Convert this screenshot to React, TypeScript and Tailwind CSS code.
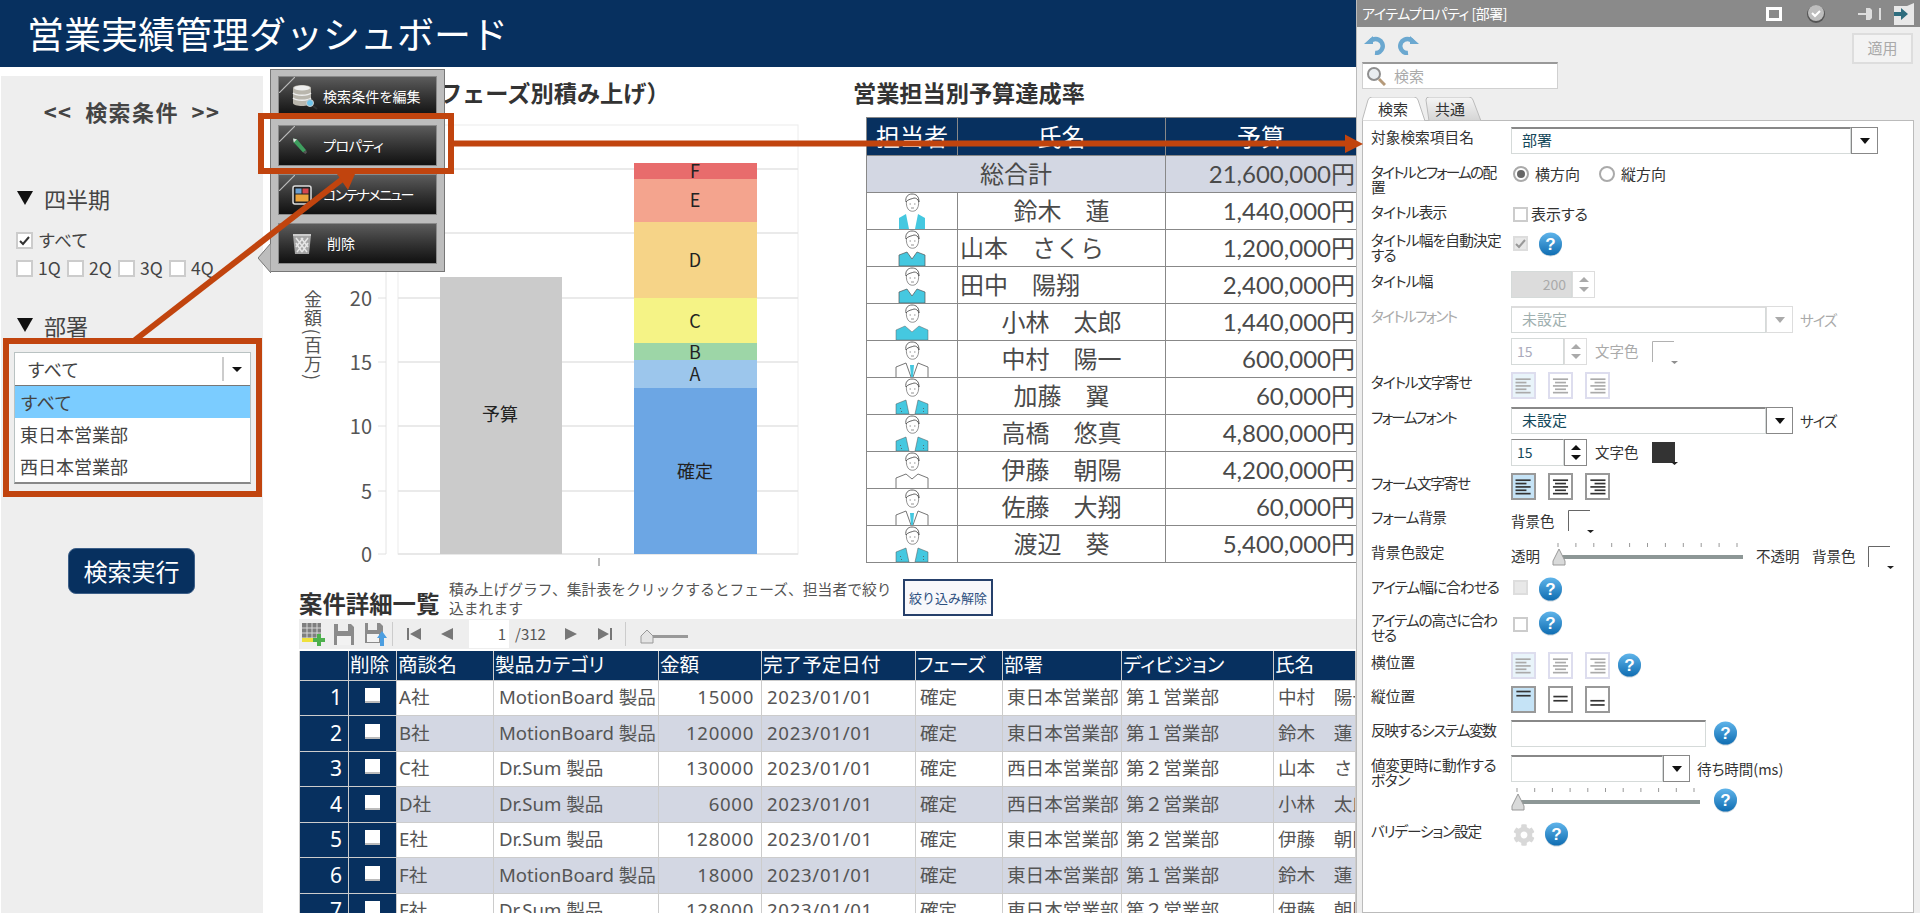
import { clsx } from 'clsx'
import { FaCog } from 'react-icons/fa'

/* ───── SVG Icons ───── */
const HelpIcon = ({ className }: { className?: string }) => (
  <svg width="25" height="25" viewBox="0 0 25 25" className={className}>
    <defs>
      <linearGradient id="helpBlue" x1="0" y1="0" x2="0" y2="1">
        <stop offset="0" stopColor="#5fb4ea" />
        <stop offset="1" stopColor="#0f6db2" />
      </linearGradient>
    </defs>
    <circle cx="12.5" cy="13" r="11.5" fill="#c9d4dc" />
    <circle cx="12.5" cy="12" r="11.5" fill="url(#helpBlue)" />
    <text x="12.5" y="18" textAnchor="middle" fontSize="17" fontWeight="700" fill="#fff" fontFamily="Liberation Sans, sans-serif">?</text>
  </svg>
)

const icons = {
  db: (
    <svg width="26" height="26" viewBox="0 0 26 26">
      <path d="M1 4c0-4 18-4 18 0v15c0 4-18 4-18 0Z" fill="#b9b6ad" />
      <path d="M1 9c3 3 15 3 18 0M1 14c3 3 15 3 18 0" stroke="#eee" strokeWidth="1.5" fill="none" />
      <ellipse cx="10" cy="4" rx="8" ry="2.5" fill="#eee" />
      <circle cx="18" cy="19" r="3.5" fill="#6cc3ea" stroke="#ccc" />
      <path d="m21 22 4 3" stroke="#333" strokeWidth="2" />
    </svg>
  ),
  pencil: (
    <svg width="16" height="17" viewBox="0 0 20 22">
      <path d="m1 2 5 1 12 14-4 3L2 7Z" fill="#3f9f5f" />
      <path d="m1 2 5 1-4 4Z" fill="#ddd" />
      <path d="m14 20 4-3 1 3-2 2Z" fill="#555" />
    </svg>
  ),
  container: (
    <svg width="20" height="20" viewBox="0 0 20 20">
      <rect x="1" y="1" width="18" height="18" rx="2" fill="#222" stroke="#ddd" strokeWidth="1.5" />
      <rect x="3.5" y="3.5" width="6" height="5" fill="#6c9fd0" />
      <rect x="10.5" y="3.5" width="6" height="5" fill="#d6484f" />
      <rect x="3.5" y="9.5" width="13" height="7" fill="#eca43c" />
    </svg>
  ),
  trash: (
    <svg width="20" height="22" viewBox="0 0 20 22">
      <path d="M1 2h18l-2 19H3Z" fill="#a5a5a5" />
      <path d="M4 5l11 14M9 5l7 9M4 10l6 9M16 5 5 19M11 5l-7 9M16 10l-6 9" stroke="#e6e6e6" strokeWidth="1.5" />
      <rect x="1" y="1" width="18" height="2" fill="#ccc" />
    </svg>
  ),
  tableAdd: (
    <svg width="25" height="25" viewBox="0 0 25 25">
      <rect x="1" y="1" width="19" height="19" fill="#7f7f7f" />
      <path d="M1 6h19M1 11h19M1 16h19M6 1v19M11 1v19M16 1v19" stroke="#d8d8d8" />
      <rect x="1" y="16" width="14" height="4" fill="#efe13c" />
      <path d="M18 12v12M12 18h12" stroke="#4cb04c" strokeWidth="4" />
    </svg>
  ),
  save: (
    <svg width="22" height="23" viewBox="0 0 22 23">
      <path d="M1 1h17l3 3v18H1Z" fill="#8b8b8b" />
      <rect x="5" y="1" width="10" height="7" fill="#eee" />
      <rect x="4" y="13" width="14" height="9" fill="#f2f2f2" />
    </svg>
  ),
  saveUp: (
    <svg width="24" height="25" viewBox="0 0 24 25">
      <path d="M1 1h15l3 3v17H1Z" fill="#8b8b8b" />
      <rect x="4" y="1" width="9" height="7" fill="#eee" />
      <rect x="3" y="12" width="12" height="8" fill="#f2f2f2" />
      <path d="M18 9l5 7h-3v8h-4v-8h-3Z" fill="#4c9ee0" />
    </svg>
  ),
  first: <svg width="16" height="12" viewBox="0 0 16 12"><path d="M1 0h2v12H1ZM15 0v12L4 6Z" fill="#777" /></svg>,
  prev: <svg width="12" height="12" viewBox="0 0 12 12"><path d="M12 0v12L0 6Z" fill="#777" /></svg>,
  next: <svg width="12" height="12" viewBox="0 0 12 12"><path d="M0 0v12l12-6Z" fill="#777" /></svg>,
  last: <svg width="16" height="12" viewBox="0 0 16 12"><path d="M13 0h2v12h-2ZM1 0v12l11-6Z" fill="#777" /></svg>,
  undo: (
    <svg width="22" height="20" viewBox="0 0 22 20">
      <path d="M6 7a7 7 0 1 1 5 11" fill="none" stroke="#6ba8d0" strokeWidth="4.5" />
      <path d="M0 9h9V1Z" fill="#6ba8d0" />
    </svg>
  ),
  redo: (
    <svg width="22" height="20" viewBox="0 0 22 20">
      <path d="M16 7a7 7 0 1 0-5 11" fill="none" stroke="#6ba8d0" strokeWidth="4.5" />
      <path d="M22 9h-9V1Z" fill="#6ba8d0" />
    </svg>
  ),
  search: (
    <svg width="20" height="20" viewBox="0 0 20 20">
      <circle cx="8" cy="8" r="6" fill="#e9edf0" stroke="#8f8f8f" strokeWidth="2" />
      <path d="m13 13 6 6" stroke="#b59a7a" strokeWidth="3" />
    </svg>
  ),
  winSquare: <svg width="16" height="14" viewBox="0 0 16 14"><rect x="1.5" y="1.5" width="13" height="11" fill="none" stroke="#fff" strokeWidth="3" /></svg>,
  winCheck: (
    <svg width="20" height="20" viewBox="0 0 20 20">
      <circle cx="10" cy="10" r="9" fill="#555" />
      <circle cx="10" cy="9" r="8" fill="#bdbdbd" />
      <path d="m6 9 3 3 5-5" fill="none" stroke="#fff" strokeWidth="2" />
    </svg>
  ),
  winPin: (
    <svg width="24" height="14" viewBox="0 0 24 14">
      <path d="M0 7h8" stroke="#ddd" strokeWidth="2" />
      <path d="M8 1h4l2 2v8l-2 2H8Z" fill="#ddd" />
      <path d="M22 1v12" stroke="#ddd" strokeWidth="2" />
    </svg>
  ),
  winExit: (
    <svg width="20" height="22" viewBox="0 0 20 22">
      <path d="M0 3h13l7-3v22H0Z" fill="#e8e8e8" />
      <path d="M0 9h7V5l7 6-7 6v-4H0Z" fill="#2f6d7e" />
    </svg>
  ),
}

/* ───── small avatar drawings for the budget table ───── */
type AvatarKind = 'full' | 'vest' | 'suit' | 'tie' | 'white' | 'narrow'

const Avatar = ({ kind }: { kind: AvatarKind }) => (
  <svg width="34" height="36" viewBox="0 0 34 36" className="mx-auto block">
    <path d="M12 5c2-3 9-3 11 0 1 4 1 8-1 11-2 3-7 3-9 0-2-3-2-7-1-11Z" fill="#fff" stroke="#777" strokeWidth="0.8" />
    <path d="M11 9c-1-5 2-8 6-8s7 2 7 8c-1-3-3-4-5-4-2 1-6 1-8 4Z" fill="#fff" stroke="#555" strokeWidth="0.9" />
    <path d="M14.500 11h1.500M19 11h1.500M16 15h3" stroke="#777" strokeWidth="0.8" />
    {kind === 'full' && <path d="M1 36V26l9-4 7 6 7-6 9 4v10Z" fill="#45c8e0" stroke="#666" strokeWidth="0.5" />}
    {kind === 'vest' && <path d="M4 36V25l8-3 5 7 5-7 8 3v11Z" fill="#45c8e0" stroke="#555" strokeWidth="0.7" />}
    {kind === 'narrow' && <path d="M4 36V25l7-4 3 15Zm26 0V25l-7-4-3 15Z" fill="#45c8e0" />}
    {kind === 'suit' && (
      <>
        <path d="M1 36V26l10-4 3 14Zm32 0V26l-10-4-3 14Z" fill="#45c8e0" stroke="#555" strokeWidth="0.5" />
        <path d="m5 30 1 1m22-1 1 1m-23 2 1 1m21-1 1 1" stroke="#555" strokeWidth="0.8" />
      </>
    )}
    {kind === 'tie' && (
      <>
        <path d="M1 36V26l10-4M33 36V26l-10-4M11 22l5 14m7-14-5 14" fill="none" stroke="#666" strokeWidth="0.9" />
        <path d="m15 24 4 0-1 12h-2Z" fill="#45c8e0" />
      </>
    )}
    {kind === 'white' && <path d="M1 36V26l10-4 6 5 6-5 10 4v10" fill="none" stroke="#666" strokeWidth="0.9" />}
  </svg>
)

const BUDGET: { kind: AvatarKind; name: string; yen: string; left?: boolean }[] = [
  { kind: 'narrow', name: '鈴木　蓮', yen: '1,440,000円' },
  { kind: 'vest', name: '山本　さくら', yen: '1,200,000円', left: true },
  { kind: 'vest', name: '田中　陽翔', yen: '2,400,000円', left: true },
  { kind: 'full', name: '小林　太郎', yen: '1,440,000円' },
  { kind: 'tie', name: '中村　陽一', yen: '600,000円' },
  { kind: 'suit', name: '加藤　翼', yen: '60,000円' },
  { kind: 'suit', name: '高橋　悠真', yen: '4,800,000円' },
  { kind: 'white', name: '伊藤　朝陽', yen: '4,200,000円' },
  { kind: 'tie', name: '佐藤　大翔', yen: '60,000円' },
  { kind: 'suit', name: '渡辺　葵', yen: '5,400,000円' },
]

const DEALS = [
  ['A社', 'MotionBoard 製品', '15000', '東日本営業部', '第１営業部', '中村　陽一'],
  ['B社', 'MotionBoard 製品', '120000', '東日本営業部', '第１営業部', '鈴木　蓮'],
  ['C社', 'Dr.Sum 製品', '130000', '西日本営業部', '第２営業部', '山本　さくら'],
  ['D社', 'Dr.Sum 製品', '6000', '西日本営業部', '第２営業部', '小林　太郎'],
  ['E社', 'Dr.Sum 製品', '128000', '東日本営業部', '第２営業部', '伊藤　朝陽'],
  ['F社', 'MotionBoard 製品', '18000', '東日本営業部', '第１営業部', '鈴木　蓮'],
  ['F社', 'Dr.Sum 製品', '128000', '東日本営業部', '第２営業部', '伊藤　朝陽'],
]

const STACK = [
  { label: 'F', y: 163, h: 16, color: '#e86c6c', ty: 178 },
  { label: 'E', y: 179, h: 43, color: '#f4a48e', ty: 207 },
  { label: 'D', y: 222, h: 76, color: '#f6d488', ty: 267 },
  { label: 'C', y: 298, h: 45, color: '#f5f386', ty: 328 },
  { label: 'B', y: 343, h: 17, color: '#9dd6a7', ty: 359 },
  { label: 'A', y: 360, h: 28, color: '#9cc6ec', ty: 381 },
  { label: '確定', y: 388, h: 166, color: '#6ca6e4', ty: 478 },
]

/* ───── chart, drawn in page coordinates ───── */
function Chart() {
  const ticks = [[0, 554], [5, 491], [10, 426], [15, 362], [20, 298], [25, 233], [30, 169]]
  return (
    <svg width="590" height="462" viewBox="263 117 590 462" className="block">
      <rect x="398" y="125" width="400" height="429" fill="#fff" stroke="#ececec" />
      <path d="M386 125v429" stroke="#e4e4e4" />
      {ticks.map(([n, y]) => (
        <g key={n}>
          <path d={`M398 ${y}h400`} stroke="#e3e3e3" strokeWidth="1.4" />
          <path d={`M378 ${y}h8`} stroke="#e0e0e0" />
          <text x="372" y={y + 8} textAnchor="end" fontSize="20" fill="#555">{n}</text>
        </g>
      ))}
      <path d="M599 558v8" stroke="#777" />
      <text x="313" y="290" fontSize="18" fill="#555" className="[writing-mode:vertical-rl] tracking-[1.2px]">金額(百万)</text>
      <rect x="440" y="277" width="122" height="277" fill="#cbcbcb" />
      <text x="500" y="421" textAnchor="middle" fontSize="18" fill="#222">予算</text>
      {STACK.map(s => (
        <g key={s.label}>
          <rect x="634" y={s.y} width="123" height={s.h} fill={s.color} />
          <text x="695" y={s.ty} textAnchor="middle" fontSize="18" fill="#222">{s.label}</text>
        </g>
      ))}
    </svg>
  )
}

const MENU = [
  { icon: icons.db, text: '検索条件を編集', notch: true, text_: 'tracking-[0.1px]' },
  { icon: icons.pencil, text: 'プロパティ', notch: true, text_: 'tracking-[-0.4px]' },
  { icon: icons.container, text: 'コンテナメニュー', notch: true, text_: 'tracking-[-1.6px]' },
  { icon: icons.trash, text: '削除', notch: false, text_: 'pl-[4px]' },
]

/* ───── right panel parts ───── */
function Row({ className, label, dim, ls, children }: { className: string; label?: React.ReactNode; dim?: boolean; ls?: string; children?: React.ReactNode }) {
  return (
    <div className={clsx('flex', className)}>
      <div className={clsx('w-[140px] shrink-0 pt-[2px] text-[14.7px] leading-[15px] whitespace-nowrap', dim ? 'text-[#aaa]' : 'text-[#333]', ls)}>{label}</div>
      <div className="flex items-start">{children}</div>
    </div>
  )
}

function Combo({ w, text, dim }: { w: string; text?: string; dim?: boolean }) {
  return (
    <div className={clsx('flex h-[27px] text-[15px]', w)}>
      <div className={clsx('flex-1 border border-[#d5dad9] border-t-2 pl-[10px] leading-[22px] bg-white', dim ? 'border-t-[#ddd] text-[#9fb0b0]' : 'border-t-[#888] text-[#14485a]')}>{text}</div>
      <div className={clsx('w-[27px] border bg-white flex items-center justify-center', dim ? 'border-[#ddd]' : 'border-[#888]')}>
        <span className={clsx('border-x-[5px] border-x-transparent border-t-[6px]', dim ? 'border-t-[#aaa]' : 'border-t-[#111]')} />
      </div>
    </div>
  )
}

function Spin({ value, dim, gray }: { value: string; dim?: boolean; gray?: boolean }) {
  return (
    <div className={clsx('flex h-[27px]', gray ? 'w-[84px]' : 'w-[76px]')}>
      <div className={clsx('flex-1 border border-[#d5dad9] pl-[5px] text-[14px] leading-[25px]', gray ? 'bg-[#dcdcdc] text-right pr-[5px] text-[#aaa]' : dim ? 'bg-white text-[#aab]' : 'bg-white border-t-[#888] text-[#14485a]')}>{value}</div>
      <div className={clsx('w-[23px] border flex flex-col items-center justify-around bg-white py-[3px]', dim || gray ? 'border-[#ddd]' : 'border-[#888]')}>
        <span className={clsx('border-x-[5px] border-x-transparent border-b-[5px]', dim || gray ? 'border-b-[#aaa]' : 'border-b-[#111]')} />
        <span className={clsx('border-x-[5px] border-x-transparent border-t-[5px]', dim || gray ? 'border-t-[#aaa]' : 'border-t-[#111]')} />
      </div>
    </div>
  )
}

function Box({ checked, dim, className }: { checked?: boolean; dim?: boolean; className?: string }) {
  return (
    <span className={clsx('inline-flex border-2 items-center justify-center shrink-0', className ?? 'w-[15px] h-[15px]', dim ? 'bg-[#e8e8e8] border-[#ddd]' : 'bg-white border-[#ccc]')}>
      {checked && <svg width="11" height="11" viewBox="0 0 11 11"><path d="m1 6 3 3 6-7" fill="none" stroke={dim ? '#999' : '#333'} strokeWidth="2" /></svg>}
    </span>
  )
}

function Swatch({ fill, className }: { fill?: boolean; className?: string }) {
  return (
    <svg width="26" height="24" viewBox="0 0 26 24" className={className}>
      {fill ? <rect x="0" y="1" width="23" height="21" fill="#333" /> : <path d="M.5 22V1.5H22" fill="none" stroke="#666" />}
      <path d="m19 21 7 0-3.5 3Z" fill="#222" />
    </svg>
  )
}

function AlignBtn({ kind, active, level }: { kind: 'left' | 'center' | 'right' | 'top' | 'middle' | 'bottom'; active?: boolean; level: 'full' | 'fade' | 'mid' }) {
  const color = level === 'full' ? '#333' : '#aaa'
  const v = kind === 'top' ? 4 : kind === 'middle' ? 10 : kind === 'bottom' ? 15 : 0
  const rows = [4, 8, 12, 16, 20]
  const x = (i: number) => {
    const w = i % 2 ? 13 : 18
    if (kind === 'left') return { x1: 3, x2: 3 + w }
    if (kind === 'right') return { x1: 22 - w, x2: 22 }
    return { x1: 12.5 - w / 2, x2: 12.5 + w / 2 }
  }
  return (
    <div className={clsx('w-[25px] h-[27px] border-2', level === 'fade' || level === 'mid' ? 'border-[#dde]' : 'border-[#999]', active ? (level === 'full' ? 'bg-[#c5e3f6]' : 'bg-[#e9f4fa]') : 'bg-white')}>
      <svg width="21" height="23" viewBox="0 0 25 27" className="block">
        {v === 0
          ? rows.map((y, i) => <line key={y} {...x(i)} y1={y + 2} y2={y + 2} stroke={color} strokeWidth="2" />)
          : [0, 5].map(d => <line key={d} x1="4" x2="21" y1={v + d} y2={v + d} stroke={color} strokeWidth="2" />)}
      </svg>
    </div>
  )
}

const AlignSet = ({ level }: { level: 'full' | 'fade' | 'mid' }) => (
  <div className="flex gap-[12px]">
    <AlignBtn kind="left" level={level} active />
    <AlignBtn kind="center" level={level} />
    <AlignBtn kind="right" level={level} />
  </div>
)

function Slider({ w }: { w: number }) {
  return (
    <svg width={w} height="26" viewBox={`0 0 ${w} 26`}>
      {Array.from({ length: 11 }, (_, i) => (
        <line key={i} x1={6 + (i * (w - 12)) / 10} x2={6 + (i * (w - 12)) / 10} y1="1" y2="5" stroke="#999" />
      ))}
      <rect x="8" y="13" width={w - 8} height="4" fill="#8d9796" />
      <path d="M7 7 13 19v4H1v-4Z" fill="#d9dada" stroke="#999" />
    </svg>
  )
}

export default function App() {
  return (
    <div className="relative flex w-[1920px] h-[913px] overflow-hidden bg-white text-[#444] font-['Noto_Sans_CJK_JP',sans-serif]">
      <div className="w-[1356px] shrink-0 flex flex-col">
        {/* Header */}
        <header className="h-[67px] shrink-0 bg-[#07305f] pl-[27px] text-[37px] leading-[67px] text-white">営業実績管理ダッシュボード</header>

        <div className="flex flex-1 min-h-0">
          {/* Search conditions */}
          <aside className="w-[262px] ml-px mt-[9px] shrink-0 bg-[#eeeeee] text-[#444]">
            <h2 className="mt-[21px] text-center text-[22px] font-bold leading-[28px] whitespace-pre tracking-[1.4px]">&lt;&lt;  検索条件  &gt;&gt;</h2>
            <div className="mt-[59px] ml-[16px] flex items-center gap-[11px] text-[22px] leading-[28px]"><span className="border-x-[8px] border-x-transparent border-t-[14px] border-t-[#111]" />四半期</div>
            <div className="mt-[14px] ml-[15px] flex items-center gap-[5px] h-[28px] text-[17.5px]"><Box checked className="w-[17px] h-[17px]" />すべて</div>
            <div className="ml-[15px] flex items-center gap-[3px] h-[28px] text-[17.5px]">
              {['1Q', '2Q', '3Q', '4Q'].map(q => (
                <span key={q} className="flex items-center gap-[5px] w-[48px]"><Box className="w-[17px] h-[17px]" />{q}</span>
              ))}
            </div>
            <div className="mt-[29px] ml-[16px] flex items-center gap-[11px] text-[22px] leading-[28px]"><span className="border-x-[8px] border-x-transparent border-t-[14px] border-t-[#111]" />部署</div>
            <div className="mt-[13px] ml-[13px] w-[237px] border border-[#b9c2c2] border-b-2 border-b-[#888] bg-white">
              <div className="flex items-center h-[33px] border-b border-b-[#777] pl-[12px] text-[18px]">
                <span className="flex-1">すべて</span>
                <span className="h-[24px] border-l-2 border-l-[#ccc]" />
                <span className="mx-[8px] border-x-[5px] border-x-transparent border-t-[5px] border-t-[#111]" />
              </div>
              {['すべて', '東日本営業部', '西日本営業部'].map((t, i) => (
                <div key={t} className={clsx('h-[32px] pl-[5px] text-[18px] leading-[32px]', i === 0 && 'bg-[#7bccff]')}>{t}</div>
              ))}
            </div>
            <button className="block mt-[64px] ml-[67px] w-[127px] h-[46px] rounded-[8px] bg-[#07305f] border border-[#3d5f88] text-[24px] leading-none text-white">検索実行</button>
          </aside>

          {/* Main */}
          <main className="flex-1 min-w-0 flex flex-col overflow-hidden">
            <div className="flex h-[512px] shrink-0">
              <section className="w-[590px] shrink-0">
                <h2 className="h-[50px] pl-[60px] pt-[9px] text-[23.2px] font-bold leading-[32px] text-[#333] whitespace-nowrap">案件状況（フェーズ別積み上げ）</h2>
                <Chart />
              </section>
              <section className="flex-1 min-w-0">
                <h2 className="h-[50px] pt-[9px] text-[23.2px] font-bold leading-[32px] text-[#333]">営業担当別予算達成率</h2>
                <table className="ml-[13px] w-[490px] table-fixed border-collapse font-['Lato','Noto_Sans_CJK_JP',sans-serif] text-[24px] text-[#4a4a4a]">
                  <colgroup><col className="w-[91px]" /><col className="w-[208px]" /><col className="w-[191px]" /></colgroup>
                  <thead>
                    <tr className="h-[38px] bg-[#07305f] text-white">
                      {['担当者', '氏名', '予算'].map(h => <th key={h} className="border border-[#888] font-normal leading-none">{h}</th>)}
                    </tr>
                  </thead>
                  <tbody>
                    <tr className="h-[35px] bg-[#d3d7e3]">
                      <td colSpan={2} className="border border-[#888] text-center">総合計</td>
                      <td className="border border-[#888] text-right pr-[1px]">21,600,000円</td>
                    </tr>
                    {BUDGET.map(b => (
                      <tr key={b.name} className="h-[36.8px]">
                        <td className="border border-[#888] p-0 align-bottom"><Avatar kind={b.kind} /></td>
                        <td className={clsx('border border-[#888] py-0 leading-none', b.left ? 'pl-[2px]' : 'text-center')}>{b.name}</td>
                        <td className="border border-[#888] text-right pr-[1px] py-0 leading-none">{b.yen}</td>
                      </tr>
                    ))}
                  </tbody>
                </table>
              </section>
            </div>

            {/* Deal list */}
            <section className="pl-[36px]">
              <div className="flex h-[40px] items-start">
                <h2 className="mt-[9px] w-[150px] shrink-0 text-[23.4px] font-bold leading-[30px] text-[#333] whitespace-nowrap">案件詳細一覧</h2>
                <p className="w-[450px] shrink-0 text-[14.8px] leading-[19px] text-[#555]">積み上げグラフ、集計表をクリックするとフェーズ、担当者で絞り込まれます</p>
                <button className="ml-[4px] mt-[0px] w-[90px] h-[37px] border-2 border-[#26406b] bg-[#f8f8fb] text-[13px] text-[#2c4f80]">絞り込み解除</button>
              </div>
              <div className="flex items-center h-[30px] bg-[#eeeeee] pl-[2px] text-[#555]">
                {icons.tableAdd}
                <span className="ml-[7px]">{icons.save}</span>
                <span className="ml-[9px]">{icons.saveUp}</span>
                <span className="ml-[4px] h-[24px] border-l border-l-[#ccc]" />
                <span className="ml-[13px]">{icons.first}</span>
                <span className="ml-[19px]">{icons.prev}</span>
                <span className="ml-[16px] w-[40px] h-[28px] bg-white pr-[3px] text-right text-[15px] leading-[28px]">1</span>
                <span className="ml-[6px] text-[15px]">/312</span>
                <span className="ml-[19px]">{icons.next}</span>
                <span className="ml-[20px]">{icons.last}</span>
                <span className="ml-[12px] h-[24px] border-l border-l-[#ccc]" />
                <svg width="48" height="14" viewBox="0 0 48 14" className="ml-[14px] mt-[5px]">
                  <rect x="4" y="5" width="44" height="3" fill="#999" />
                  <path d="M7 0 13 6v7H1V6Z" fill="#e4e4e4" stroke="#999" />
                </svg>
              </div>
              <table className="mt-[2px] w-[1056px] table-fixed border-collapse font-['Noto_Sans','Noto_Sans_CJK_JP',sans-serif] text-[18.6px] text-[#555]">
                <colgroup>
                  <col className="w-[49px]" /><col className="w-[48px]" /><col className="w-[97px]" /><col className="w-[165px]" /><col className="w-[103px]" />
                  <col className="w-[154px]" /><col className="w-[87px]" /><col className="w-[119px]" /><col className="w-[152px]" /><col className="w-[82px]" />
                </colgroup>
                <thead>
                  <tr className="h-[29px] bg-[#07305f] text-white text-[19.6px] [font-feature-settings:'palt']">
                    {['', '削除', '商談名', '製品カテゴリ', '金額', '完了予定日付', 'フェーズ', '部署', 'ディビジョン', '氏名'].map(h => (
                      <th key={h} className="border border-[#ccc] border-t-0 pl-[1px] text-left font-normal leading-none whitespace-nowrap overflow-hidden">{h}</th>
                    ))}
                  </tr>
                </thead>
                <tbody>
                  {DEALS.map((d, i) => (
                    <tr key={i} className={clsx('h-[35.5px]', i % 2 === 1 && 'bg-[#d3d7e3]')}>
                      <td className="border border-[#ccc] bg-[#07305f] pr-[6px] text-right text-[21px] leading-none text-white">{i + 1}</td>
                      <td className="border border-[#ccc] bg-[#07305f] pb-[4px]"><span className="block mx-auto w-[15px] h-[15px] bg-white border-b-2 border-b-[#bbb]" /></td>
                      <td className="border border-[#ccc] pl-[2px] leading-none whitespace-nowrap">{d[0]}</td>
                      <td className="border border-[#ccc] pl-[5px] leading-none whitespace-nowrap overflow-hidden">{d[1]}</td>
                      <td className="border border-[#ccc] pr-[7px] text-right leading-none tracking-[0.7px]">{d[2]}</td>
                      <td className="border border-[#ccc] pl-[5px] leading-none tracking-[0.7px]">2023/01/01</td>
                      <td className="border border-[#ccc] pl-[4px] leading-none">確定</td>
                      <td className="border border-[#ccc] pl-[4px] leading-none whitespace-nowrap overflow-hidden">{d[3]}</td>
                      <td className="border border-[#ccc] pl-[4px] leading-none whitespace-nowrap overflow-hidden">{d[4]}</td>
                      <td className="border border-[#ccc] pl-[4px] leading-none whitespace-nowrap overflow-hidden">{d[5]}</td>
                    </tr>
                  ))}
                </tbody>
              </table>
            </section>
          </main>
        </div>
      </div>

      {/* Item property panel */}
      <aside className="flex-1 min-w-0 flex flex-col bg-[#eeeeee] border-l border-l-[#bbb] [font-feature-settings:'palt'] text-[#333]">
        <div className="flex items-center h-[27px] shrink-0 bg-[#8a8a8a] pl-[5px] text-[14px] text-white">
          <span className="flex-1 tracking-[-0.5px]">アイテムプロパティ [部署]</span>
          <span className="mr-[24px]">{icons.winSquare}</span>
          <span className="mr-[32px]">{icons.winCheck}</span>
          <span className="mr-[12px]">{icons.winPin}</span>
          <span className="mr-[6px]">{icons.winExit}</span>
        </div>
        <div className="flex justify-between pl-[5px] pr-[7px]">
          <div>
            <div className="flex items-center gap-[11px] h-[35px] pl-[2px]">{icons.undo}{icons.redo}</div>
            <div className="flex items-center w-[196px] h-[27px] border border-[#d0d0d0] border-t-2 border-t-[#999] bg-white pl-[3px] gap-[8px] text-[15px] text-[#aaa]">{icons.search}検索</div>
          </div>
          <button className="mt-[6px] w-[61px] h-[31px] border-2 border-[#ddd] bg-[#f3f3f3] text-[15px] text-[#aaa]">適用</button>
        </div>
        <div className="mt-[8px] pl-[5px] flex h-[24px] -mb-px relative z-10 text-[15px]">
          <div className="relative w-[63px]">
            <svg width="63" height="24" viewBox="0 0 63 24" className="absolute inset-0"><path d="M0 24 6 3q1-3 4-3h42q3 0 4 3l7 21Z" fill="#fff" stroke="#bbb" /></svg>
            <span className="absolute left-[16px] top-0 leading-[24px]">検索</span>
          </div>
          <div className="relative w-[59px] -ml-px">
            <svg width="59" height="24" viewBox="0 0 59 24" className="absolute inset-0">
              <defs><linearGradient id="tabOff" x1="0" y1="0" x2="0" y2="1"><stop offset="0" stopColor="#f5f5f5" /><stop offset="1" stopColor="#d4d4d4" /></linearGradient></defs>
              <path d="M5 24 2 3q0-3 3-3h40q3 0 4 3l8 21Z" fill="url(#tabOff)" stroke="#bbb" />
            </svg>
            <span className="absolute left-[11px] top-0 leading-[24px]">共通</span>
          </div>
        </div>
        <div className="flex-1 ml-[5px] mr-[6px] border border-[#bbb] bg-white pl-[8px] pt-[6px]">
          <Row className="h-[35px]" label="対象検索項目名"><Combo w="w-[367px]" text="部署" /></Row>
          <Row className="h-[40px]" ls="tracking-[-1.8px]" label={<>タイトルとフォームの配<br />置</>}>
            <div className="mt-[3px] flex items-center h-[18px] gap-[6px] text-[15px] pl-[2px]">
              <svg width="16" height="16" viewBox="0 0 16 16"><circle cx="8" cy="8" r="7" fill="#fff" stroke="#aaa" strokeWidth="2" /><circle cx="8" cy="8" r="4" fill="#666" /></svg>
              <span className="w-[58px]">横方向</span>
              <svg width="16" height="16" viewBox="0 0 16 16"><circle cx="8" cy="8" r="7" fill="#fff" stroke="#aaa" strokeWidth="2" /></svg>
              <span>縦方向</span>
            </div>
          </Row>
          <Row className="h-[28px]" ls="tracking-[-0.8px]" label="タイトル表示">
            <div className="flex items-center gap-[3px] text-[15px] pl-[2px] mt-[1px]"><Box />表示する</div>
          </Row>
          <Row className="h-[41px]" ls="tracking-[-0.8px]" label={<>タイトル幅を自動決定<br />する</>}>
            <Box checked dim className="ml-[2px] mt-[6px] w-[15px] h-[15px]" /><HelpIcon className="ml-[10px] mt-[2px]" />
          </Row>
          <Row className="h-[35px]" ls="tracking-[-0.8px]" label="タイトル幅"><Spin value="200" gray /></Row>
          <Row className="h-[32px]" ls="tracking-[-1.7px]" dim label="タイトルフォント">
            <Combo w="w-[282px]" text="未設定" dim /><span className="ml-[7px] mt-[3px] text-[14.5px] text-[#aaa] tracking-[-1px]">サイズ</span>
          </Row>
          <Row className="h-[34px]">
            <Spin value="15" dim /><span className="ml-[8px] mt-[2px] text-[14.5px] text-[#aaa]">文字色</span><Swatch className="ml-[13px] mt-[2px] opacity-50" />
          </Row>
          <Row className="h-[35px]" ls="tracking-[-1.1px]" label="タイトル文字寄せ"><AlignSet level="mid" /></Row>
          <Row className="h-[32px]" ls="tracking-[-1.7px]" label="フォームフォント">
            <Combo w="w-[282px]" text="未設定" /><span className="ml-[7px] mt-[3px] text-[14.5px] tracking-[-1px]">サイズ</span>
          </Row>
          <Row className="h-[34px]">
            <Spin value="15" /><span className="ml-[8px] mt-[2px] text-[14.5px]">文字色</span><Swatch fill className="ml-[13px] mt-[2px]" />
          </Row>
          <Row className="h-[34px]" ls="tracking-[-1.4px]" label="フォーム文字寄せ"><AlignSet level="full" /></Row>
          <Row className="h-[35px]" ls="tracking-[-1px]" label="フォーム背景">
            <span className="mt-[3px] w-[57px] text-[14.5px]">背景色</span><Swatch className="mt-[2px]" />
          </Row>
          <Row className="h-[35px]" label="背景色設定">
            <span className="mt-[3px] w-[41px] text-[14.5px]">透明</span>
            <Slider w={191} />
            <span className="ml-[13px] mt-[3px] w-[56px] text-[14.5px]">不透明</span>
            <span className="mt-[3px] w-[56px] text-[14.5px]">背景色</span><Swatch className="mt-[3px]" />
          </Row>
          <Row className="h-[33px]" ls="tracking-[-1px]" label="アイテム幅に合わせる">
            <Box dim className="ml-[2px] mt-[3px] w-[15px] h-[15px]" /><HelpIcon className="ml-[10px]" />
          </Row>
          <Row className="h-[42px]" ls="tracking-[-1.2px]" label={<>アイテムの高さに合わ<br />せる</>}>
            <Box className="ml-[2px] mt-[7px] w-[15px] h-[15px]" /><HelpIcon className="ml-[10px] mt-[1px]" />
          </Row>
          <Row className="h-[34px]" label="横位置"><AlignSet level="fade" /><HelpIcon className="ml-[7px] mt-[1px]" /></Row>
          <Row className="h-[34px]" label="縦位置">
            <div className="flex gap-[12px]">
              <AlignBtn kind="top" level="full" active />
              <AlignBtn kind="middle" level="full" />
              <AlignBtn kind="bottom" level="full" />
            </div>
          </Row>
          <Row className="h-[35px]" ls="tracking-[-1.4px]" label="反映するシステム変数">
            <div className="w-[195px] h-[27px] border border-[#d5dad9] border-t-2 border-t-[#888]" /><HelpIcon className="ml-[7px] mt-[1px]" />
          </Row>
          <Row className="h-[32px]" ls="tracking-[-0.4px]" label={<>値変更時に動作する<br />ボタン</>}>
            <Combo w="w-[179px]" /><span className="ml-[7px] mt-[3px] text-[14.5px]">待ち時間(ms)</span>
          </Row>
          <Row className="h-[34px]">
            <Slider w={189} /><HelpIcon className="ml-[13px] mt-[1px]" />
          </Row>
          <Row className="h-[34px]" ls="tracking-[-1.2px]" label="バリデーション設定">
            <FaCog className="ml-[2px] mt-[3px] text-[22px] text-[#d8d8d8]" /><HelpIcon className="ml-[9px] mt-[1px]" />
          </Row>
        </div>
      </aside>

      {/* Property popup */}
      <div className="absolute left-[270px] top-[69px] w-[175px] h-[203px] border border-[#777] bg-[#bdbdbd] pl-[7px] pr-[7px] pt-[6px] flex flex-col gap-[8px] [font-feature-settings:'palt']">
        <svg width="13" height="30" viewBox="0 0 13 30" className="absolute -left-[13px] top-[173px]"><path d="M13 0 0 15l13 15Z" fill="#bdbdbd" stroke="#777" /></svg>
        {MENU.map(m => (
          <div key={m.text} className="relative flex items-center h-[41px] border border-[#8a8a8a] bg-gradient-to-b from-[#5c5c5c] to-[#111] pl-[13px] text-[14px] text-white whitespace-nowrap">
            {m.notch && <svg width="16" height="16" viewBox="0 0 16 16" className="absolute left-0 top-0"><path d="M0 16 16 0" stroke="#bbb" strokeWidth="1.2" /></svg>}
            <span className="w-[31px] shrink-0">{m.icon}</span><span className={m.text_}>{m.text}</span>
          </div>
        ))}
      </div>

      {/* Orange annotation */}
      <svg width="1920" height="913" viewBox="0 0 1920 913" className="absolute inset-0 pointer-events-none">
        <rect x="261" y="116" width="190" height="55" fill="none" stroke="#c1440e" strokeWidth="6" />
        <rect x="6" y="341" width="253" height="153" fill="none" stroke="#c1440e" strokeWidth="6" />
        <path d="M135 340 345 177" stroke="#c1440e" strokeWidth="6" />
        <path d="M337 174h18l-7 16Z" fill="#c1440e" />
        <path d="M454 143.500h892" stroke="#c1440e" strokeWidth="6" />
        <path d="M1345 134.500 1363 144l-18 9Z" fill="#c1440e" />
      </svg>
    </div>
  )
}
